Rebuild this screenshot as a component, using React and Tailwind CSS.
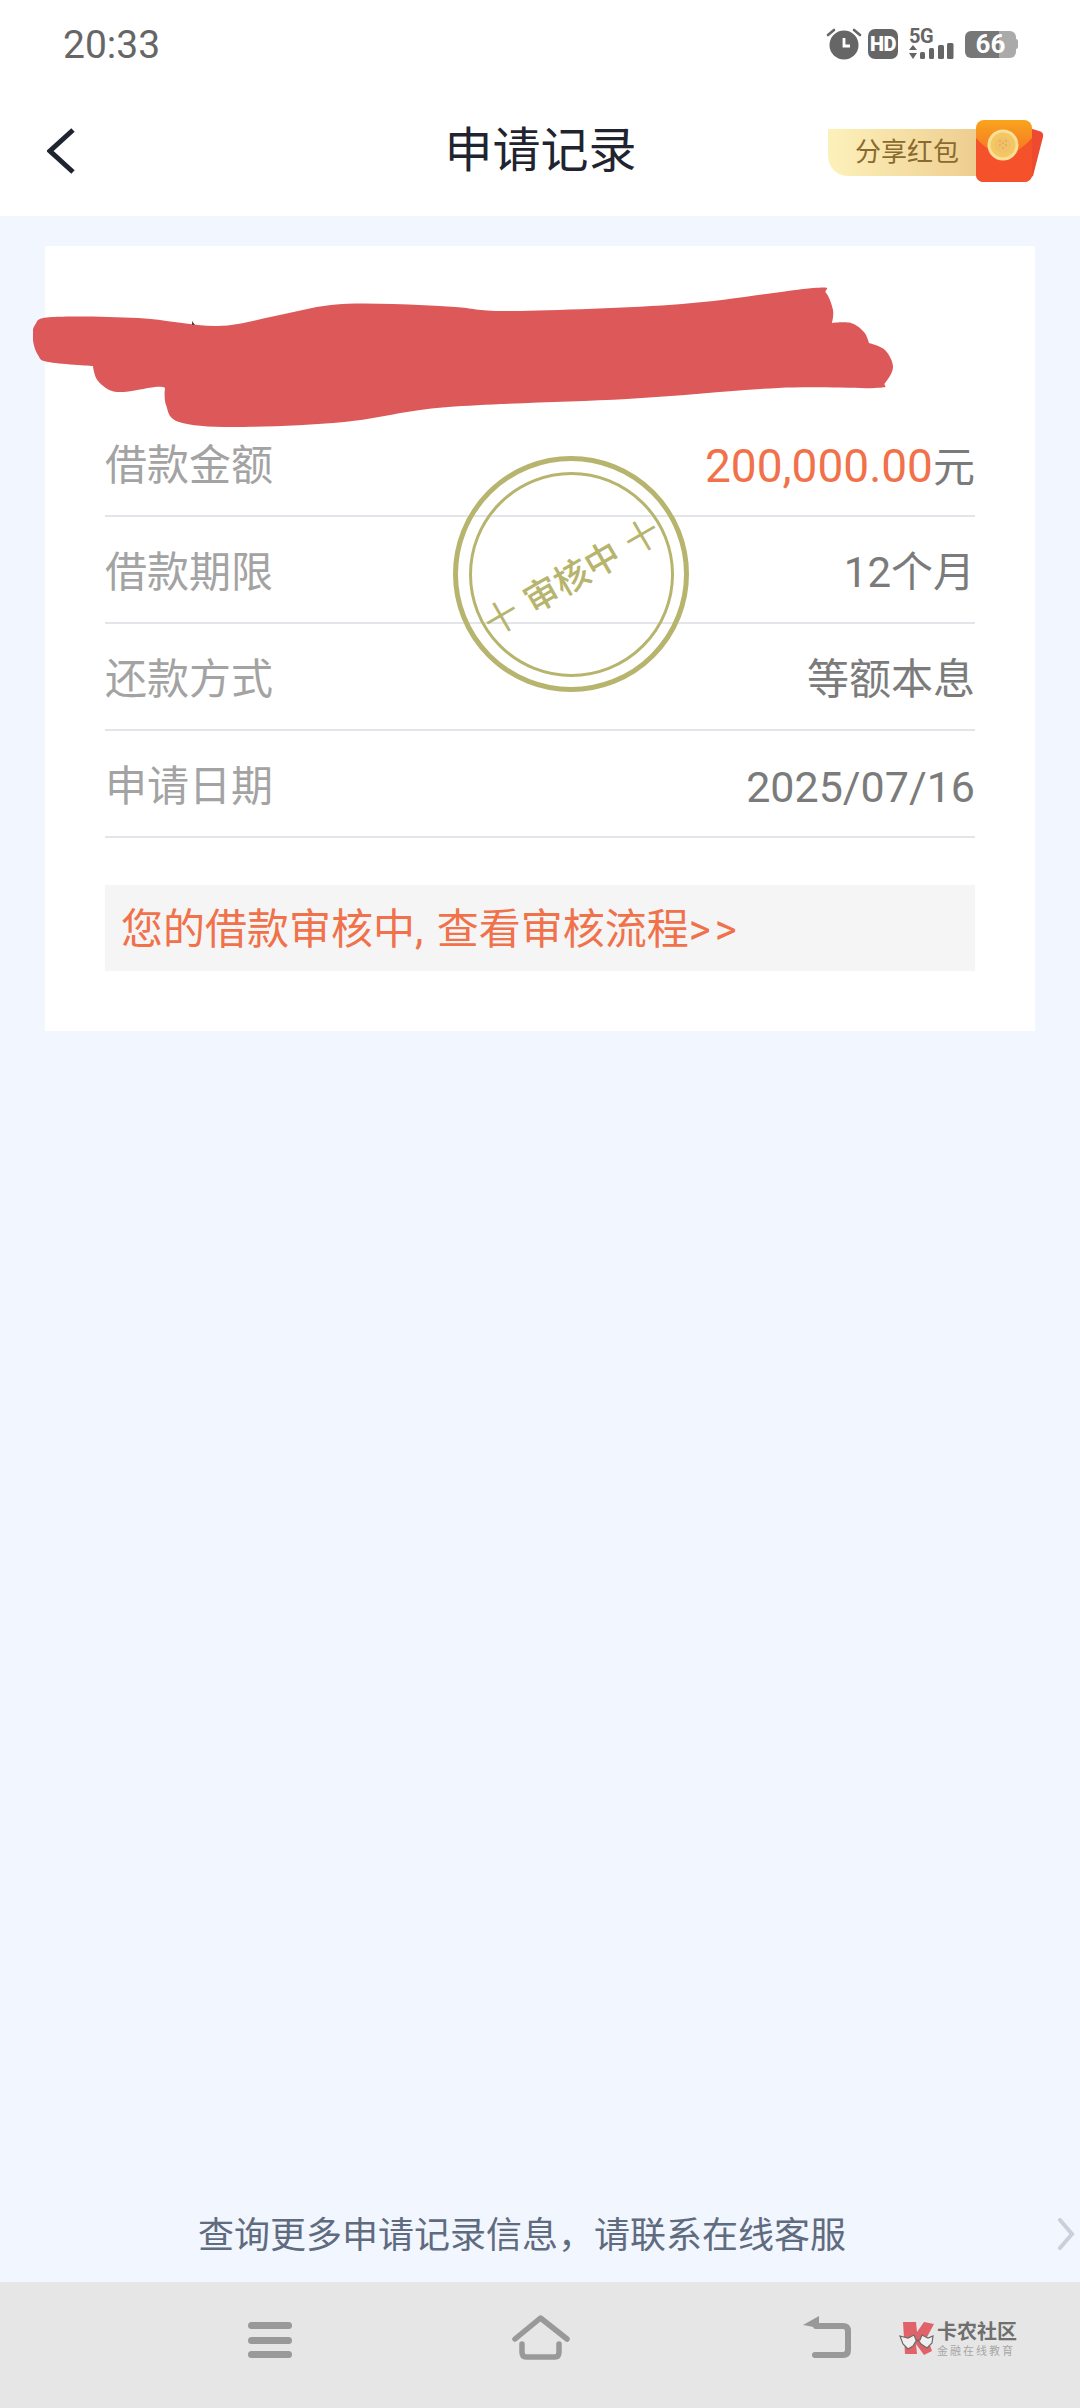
const cjk = "font-['Roboto','Noto_Sans_CJK_SC',sans-serif]";

const rows = [
  { label: '借款金额', value: <><span className="text-[46px] text-[#f0714a]">200,000.00</span>元</> },
  { label: '借款期限', value: '12个月' },
  { label: '还款方式', value: '等额本息' },
  { label: '申请日期', value: <span className="text-[43px]">2025/07/16</span> },
];

// outline of the red marker scribble, in page pixels; third value marks a sharp corner
const scribblePoints = [
  [33, 340], [35, 325], [52, 317], [138, 318], [217, 326], [275, 316], [331, 305], [393, 304],
  [455, 307], [513, 311], [682, 304], [813, 288], [826, 293], [833, 310], [832, 323, 1], [851, 323], [864, 332],
  [869, 343, 1], [885, 350], [893, 367], [885, 383], [875, 388], [778, 388], [627, 399], [448, 407],
  [344, 422], [234, 427], [179, 422], [166, 405], [165, 388, 1], [155, 387], [117, 392], [98, 381],
  [93, 366, 1], [48, 362], [38, 355],
];

const smoothPath = (pts) => {
  const n = pts.length;
  let d = `M${pts[0][0]} ${pts[0][1]}`;
  for (let i = 0; i < n; i++) {
    const p0 = pts[(i - 1 + n) % n];
    const p1 = pts[i];
    const p2 = pts[(i + 1) % n];
    const p3 = pts[(i + 2) % n];
    const c1 = p1[2] ? p1 : [p1[0] + (p2[0] - p0[0]) / 6, p1[1] + (p2[1] - p0[1]) / 6];
    const c2 = p2[2] ? p2 : [p2[0] - (p3[0] - p1[0]) / 6, p2[1] - (p3[1] - p1[1]) / 6];
    d += `C${c1[0]} ${c1[1]} ${c2[0]} ${c2[1]} ${p2[0]} ${p2[1]}`;
  }
  return d + 'Z';
};

const StatusIcons = () => (
  <div className="flex items-center">
    <svg width="36" height="32" viewBox="0 0 36 32" className="mr-[6px]">
      <circle cx="18" cy="17" r="14.5" fill="#666" />
      <path d="M18 10v8h6" fill="none" stroke="#fff" strokeWidth="2.8" />
      <path d="M2 7 8 2M34 7 28 2" stroke="#666" strokeWidth="2.6" strokeLinecap="round" />
    </svg>
    <div className="w-[30px] h-[30px] rounded-[7px] bg-[#666] flex items-center justify-center text-white text-[20px] font-black leading-none tracking-[-0.5px] font-['Roboto',sans-serif]">HD</div>
    <div className="relative w-[47px] h-[30px] ml-[11px]">
      <span className="absolute left-0 top-[-2px] text-[20px] font-bold leading-[18px] tracking-[-0.5px] text-[#666] font-['Roboto',sans-serif]">5G</span>
      <svg width="47" height="30" viewBox="0 0 47 30" className="absolute inset-0">
        <path d="M0 21 4 16 8 21ZM0 24 4 30 8 24Z" fill="#666" />
        <rect x="11" y="23" width="5" height="7" rx="1.5" fill="#666" />
        <rect x="20" y="19" width="5" height="11" rx="1.5" fill="#666" />
        <rect x="29" y="16" width="6" height="14" rx="1.5" fill="#666" />
        <rect x="38" y="14" width="6.5" height="16" rx="1.5" fill="#666" />
      </svg>
    </div>
    <div className="relative w-[53px] h-[27px] ml-[9px] flex items-center">
      <div className="w-[51px] h-[27px] rounded-[6px] bg-[linear-gradient(90deg,#777_0%,#777_66%,#aaa_66%,#aaa_100%)] flex items-center justify-center text-white text-[26px] font-bold leading-none font-['Roboto',sans-serif]">66</div>
      <div className="w-[2px] h-[10px] rounded-r-sm bg-[#aaa]" />
    </div>
  </div>
);

const RedPacket = () => (
  <svg width="68" height="62" viewBox="0 0 68 62" className="-ml-[4px] shrink-0">
    <defs>
      <linearGradient id="pk" x1="0" y1="0" x2="0" y2="1">
        <stop offset="0" stopColor="#f8a51d" />
        <stop offset="0.6" stopColor="#f76f24" />
        <stop offset="1" stopColor="#f5502a" />
      </linearGradient>
    </defs>
    <path d="M50 7 63 11Q68 12 67 17L57 56 50 60Z" fill="#ee4a30" />
    <rect x="0" y="0" width="56" height="62" rx="8" fill="url(#pk)" />
    <path d="M0 18Q28 50 56 18V54Q56 62 48 62H8Q0 62 0 54Z" fill="#f5512a" />
    <circle cx="27" cy="25" r="14" fill="#f4c860" stroke="#f9e09a" strokeWidth="3" />
    <circle cx="27" cy="25" r="8" fill="#f0c06a" />
    <path d="M23 21h2M29 21h2M23 25h2M29 25h2M26 23h2M26 28h2" stroke="#e8a94e" strokeWidth="1.6" />
  </svg>
);

const Stamp = () => (
  <div className="absolute left-[408px] top-[210px] w-[236px] h-[236px] rounded-full border-[5px] border-[#b7b46e] flex items-center justify-center">
    <div className="w-[205px] h-[205px] rounded-full border-[3px] border-[#b7b46e] flex items-center justify-center">
      <div className="-rotate-[30deg] flex items-center justify-center gap-[11px] text-[35px] leading-none whitespace-nowrap text-[#b7b46e] font-['Noto_Sans_CJK_SC',sans-serif]">
        <span>十</span>
        <span className="font-medium">审核中</span>
        <span>十</span>
      </div>
    </div>
  </div>
);

const Scribble = () => (
  <svg width="900" height="160" viewBox="0 0 900 160" className="absolute left-[-12px] top-[40px]">
    <g transform="translate(-33 -286)">
      <path fill="#dc5859" d={smoothPath(scribblePoints)} />
      <path d="M192 321 195 325H192Z" fill="#5a3a3a" />
    </g>
  </svg>
);

const Logo = () => (
  <div className="flex items-start">
    <svg width="36" height="34" viewBox="0 0 36 34" className="shrink-0">
      <path d="M4 1H17L18 11 25 1 35 3 28 16 33 30 25 34 17 23 18 33H6Z" fill="#e2626a" />
      <path d="M1 15 9 17 15 14 17 19 21 19 23 14 29 17 34 15 33 22 28 27 22 23 20 20 17 20 14 25 9 28 4 23Z" fill="#f0f0f0" stroke="#6b6b6b" strokeWidth="1.2" />
    </svg>
    <div className="ml-[2px] font-['Noto_Sans_CJK_SC',sans-serif]">
      <div className="text-[20px] leading-[20px] font-bold text-[#6f6f6f] whitespace-nowrap">卡农社区</div>
      <div className="text-[11px] leading-[14px] mt-[2px] tracking-[2px] text-[#a6a6a6] whitespace-nowrap">金融在线教育</div>
    </div>
  </div>
);

export default function App() {
  return (
    <div className={`w-[1080px] h-[2408px] flex flex-col bg-[#f2f6fe] overflow-hidden ${cjk}`}>
      <div className="bg-white h-[216px] shrink-0">
        <div className="h-[88px] flex items-center justify-between pl-[63px] pr-[62px]">
          <span className="text-[39px] leading-none text-[#666] mt-[2px]">20:33</span>
          <StatusIcons />
        </div>
        <div className="h-[128px] flex items-center pb-[2px]">
          <div className="flex-1 pl-[47px]">
            <svg width="30" height="46" viewBox="0 0 30 46">
              <path d="M26 2 3 23 26 44" fill="none" stroke="#1f2430" strokeWidth="5" />
            </svg>
          </div>
          <h1 className="text-[48px] leading-none font-normal text-[#1f2430] whitespace-nowrap mr-[10px]">申请记录</h1>
          <div className="flex-1 flex justify-end items-center pr-[36px]">
            <div className="w-[152px] h-[47px] mt-[2px] rounded-bl-[20px] bg-[linear-gradient(90deg,#fdf1bb,#eecd8e)] pl-[27px] flex items-center text-[26px] leading-none text-[#8a6a2e] whitespace-nowrap">分享红包</div>
            <RedPacket />
          </div>
        </div>
      </div>

      <div className="mx-[45px] mt-[30px] h-[785px] bg-white px-[60px] pt-[164px] relative shrink-0">
        <Scribble />
        {rows.map((row) => (
          <div key={row.label} className="h-[107px] pt-[7px] border-b-2 border-[#e2e5e9] flex items-center justify-between text-[42px] leading-none">
            <span className="text-[#a3a3a3]">{row.label}</span>
            <span className="text-[#7b7b7b]">{row.value}</span>
          </div>
        ))}
        <div className="mt-[47px] h-[86px] bg-[#f5f5f5] pl-[16px] pt-[4px] flex items-center text-[42px] leading-none text-[#f0714a] whitespace-nowrap [word-spacing:3px]">
          您的借款审核中, 查看审核流程<span className="tracking-[4px]">&gt;&gt;</span>
        </div>
        <Stamp />
      </div>

      <div className="mt-auto h-[92px] flex items-center justify-between pl-[198px] pr-[5px] shrink-0">
        <span className="text-[36px] leading-none text-[#5f6b7e] whitespace-nowrap">查询更多申请记录信息，请联系在线客服</span>
        <svg width="18" height="32" viewBox="0 0 18 32" className="mb-[4px]">
          <path d="M3 2 15 16 3 30" fill="none" stroke="#c9d0dc" strokeWidth="4" strokeLinecap="round" />
        </svg>
      </div>

      <div className="h-[126px] bg-[#e6e6e6] flex items-center pl-[248px] pr-[60px] shrink-0">
        <div className="w-[44px] h-[36px] mb-[10px] flex flex-col justify-between">
          <div className="h-[7px] rounded-sm bg-[#999]" />
          <div className="h-[7px] rounded-sm bg-[#999]" />
          <div className="h-[7px] rounded-sm bg-[#999]" />
        </div>
        <svg width="58" height="46" viewBox="0 0 58 46" className="ml-[220px] mb-[15px]">
          <path d="M3 24 28.5 3 55 24M10 29V37Q10 42 14 42H43Q47 42 47 37V29" fill="none" stroke="#999" strokeWidth="5.5" strokeLinecap="round" strokeLinejoin="round" />
        </svg>
        <svg width="50" height="44" viewBox="0 0 50 44" className="ml-[232px] mb-[18px]">
          <path d="M17 2 1 11 17 14Z" fill="#999" />
          <path d="M14 12H41Q46 12 46 17V36Q46 41 41 41H13" fill="none" stroke="#999" strokeWidth="6" strokeLinecap="round" />
        </svg>
        <div className="ml-[47px] mb-[12px]"><Logo /></div>
      </div>
    </div>
  );
}
